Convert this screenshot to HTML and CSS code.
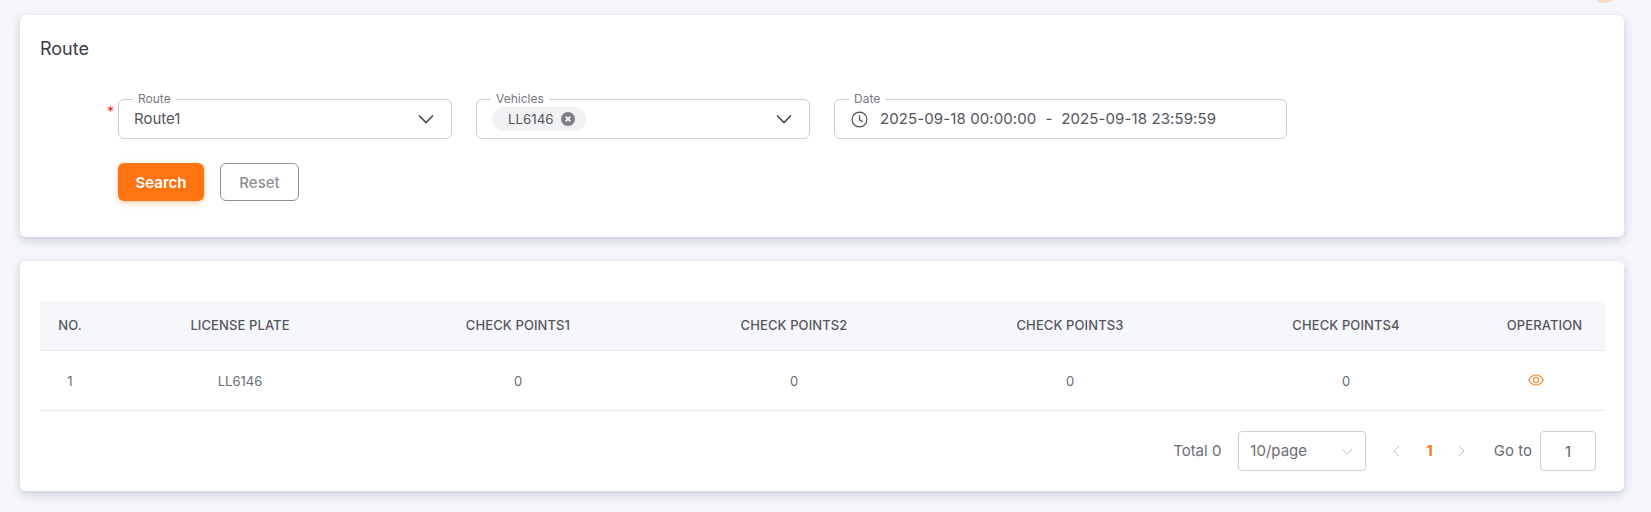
FILE: index.html
```html
<!DOCTYPE html>
<html lang="en">
<head>
<meta charset="utf-8">
<title>Route</title>
<link rel="stylesheet" href="styles.css">
</head>
<body>
<span class="avatar"></span>
<main class="page">
  <section class="card search-card">
    <h1 class="title">Route</h1>
    <div class="fields">
      <div class="field field-route">
        <span class="required">*</span>
        <span class="legend">Route</span>
        <span class="value">Route1</span>
        <svg class="chevron" viewBox="0 0 16 10"><path d="M1 1.500 8 8.500 15 1.500"/></svg>
      </div>
      <div class="field field-vehicles">
        <span class="legend">Vehicles</span>
        <span class="chip">LL6146
          <svg class="chip-x" viewBox="0 0 14 14"><circle cx="7" cy="7" r="7"/><path d="M4.600 4.600 9.400 9.400M9.400 4.600 4.600 9.400"/></svg>
        </span>
        <svg class="chevron" viewBox="0 0 16 10"><path d="M1 1.500 8 8.500 15 1.500"/></svg>
      </div>
      <div class="field field-date">
        <span class="legend">Date</span>
        <svg class="clock" viewBox="0 0 16 16"><circle cx="8" cy="8" r="7"/><path d="M8 4v4.300l3 1.700"/></svg>
        <span class="value date-value">2025-09-18 00:00:00</span>
        <span class="value date-sep">-</span>
        <span class="value date-value">2025-09-18 23:59:59</span>
      </div>
    </div>
    <div class="actions">
      <button class="btn btn-primary" type="button">Search</button>
      <button class="btn btn-plain" type="button">Reset</button>
    </div>
  </section>

  <section class="card table-card">
    <table class="table">
      <colgroup>
        <col class="col-no"><col class="col-plate"><col class="col-cp"><col class="col-cp"><col class="col-cp"><col class="col-cp"><col>
      </colgroup>
      <thead>
        <tr>
          <th>NO.</th><th>LICENSE PLATE</th><th>CHECK POINTS1</th><th>CHECK POINTS2</th><th>CHECK POINTS3</th><th>CHECK POINTS4</th><th>OPERATION</th>
        </tr>
      </thead>
      <tbody>
        <tr>
          <td>1</td><td>LL6146</td><td>0</td><td>0</td><td>0</td><td>0</td>
          <td class="op-cell"><svg class="eye" viewBox="0 0 16 12"><path d="M.8 6C2.400 2.900 5 1 8 1s5.600 1.900 7.200 5C13.600 9.100 11 11 8 11S2.400 9.100.8 6Z"/><circle cx="8" cy="6" r="2.600"/></svg></td>
        </tr>
      </tbody>
    </table>
    <div class="pager">
      <span class="total">Total 0</span>
      <div class="size">10/page
        <svg class="size-chevron" viewBox="0 0 12 7"><path d="M1 1 6 6 11 1"/></svg>
      </div>
      <svg class="arrow arrow-prev" viewBox="0 0 7 12"><path d="M6 1 1 6 6 11"/></svg>
      <span class="current">1</span>
      <svg class="arrow arrow-next" viewBox="0 0 7 12"><path d="M1 1 6 6 1 11"/></svg>
      <span class="goto">Go to</span>
      <div class="jump">1</div>
    </div>
  </section>
</main>
</body>
</html>
```
FILE: styles.css
```css
* { box-sizing: border-box; }
html, body { height: 100%; }
body {
  margin: 0;
  background: #f4f6fa;
  font-family: Inter, "Liberation Sans", sans-serif;
  color: #5f6066;
  overflow: hidden;
  position: relative;
}
.avatar {
  position: absolute;
  top: -22px;
  left: 1592px;
  width: 25px;
  height: 25px;
  border-radius: 50%;
  background: #fbd9c8;
}
.page {
  display: flex;
  flex-direction: column;
  gap: 24px;
  padding: 15px 27px 0 20px;
}
.card {
  background: #fff;
  border-radius: 6px;
  box-shadow: 0 3px 10px rgba(60, 70, 90, 0.24);
}
.search-card { height: 222px; padding: 0 20px; }
.title {
  margin: 0;
  padding-top: 24px;
  font-size: 18px;
  line-height: 20px;
  font-weight: 400;
  color: #3c3d48;
}
.fields {
  display: flex;
  gap: 24px;
  margin: 40px 0 0 78px;
}
.field {
  position: relative;
  height: 40px;
  border: 1px solid #ccced3;
  border-radius: 6px;
  display: flex;
  align-items: center;
  padding: 0 15px;
}
.field-route, .field-vehicles { width: 334px; }
.field-date { width: 453px; padding-left: 17px; }
.required {
  position: absolute;
  left: -12px;
  top: 5px;
  color: #e5262a;
  font-size: 14px;
  line-height: 14px;
}
.legend {
  position: absolute;
  left: 14px;
  top: -8px;
  padding: 0 5px;
  background: #fff;
  font-size: 12px;
  line-height: 14px;
  color: #77787e;
}
.value { font-size: 15px; line-height: 20px; color: #54555b; }
.chevron {
  position: absolute;
  right: 17px;
  top: 14px;
  width: 16px;
  height: 10px;
  fill: none;
  stroke: #4a4b50;
  stroke-width: 1.6;
}
.chip {
  display: inline-flex;
  align-items: center;
  gap: 7px;
  height: 24px;
  padding: 0 11px 0 16px;
  border-radius: 12px;
  background: #f1f2f4;
  font-size: 13.3px;
  color: #54555b;
}
.chip-x { width: 14px; height: 14px; }
.chip-x circle { fill: #7d7e85; }
.chip-x path { stroke: #fff; stroke-width: 1.6; fill: none; }
.clock {
  width: 17px;
  height: 17px;
  margin: 0 12px 0 -1px;
  fill: none;
  stroke: #54555b;
  stroke-width: 1.1;
}
.date-value { letter-spacing: 0.1px; }
.date-sep { margin: 0 9px; }
.actions {
  display: flex;
  gap: 16px;
  margin: 24px 0 0 78px;
}
.btn {
  height: 38px;
  border-radius: 6px;
  font-family: inherit;
  font-size: 15px;
}
.btn-primary {
  width: 86px;
  border: 0;
  background: #ff7410;
  color: #fff;
  font-weight: 600;
  box-shadow: 0 2px 6px rgba(255, 116, 16, 0.35);
}
.btn-plain {
  width: 79px;
  border: 1px solid #8f9096;
  background: #fff;
  color: #8f9096;
  font-weight: 500;
}
.table-card { height: 230px; padding: 40px 19px 0 20px; }
.table {
  width: 100%;
  border-collapse: collapse;
  table-layout: fixed;
  font-size: 13px;
}
.col-no { width: 60px; }
.col-plate { width: 280px; }
.col-cp { width: 276px; }
.table th {
  height: 49px;
  padding: 0;
  background: #f5f7fb;
  border-bottom: 1px solid #e8eaee;
  font-weight: 500;
  color: #55565d;
  text-align: center;
  letter-spacing: 0.1px;
}
.table td {
  height: 60px;
  padding: 2px 0 0;
  border-bottom: 1px solid #e8eaee;
  text-align: center;
  font-size: 13px;
  color: #6b6c72;
}
.table .op-cell { padding: 0 17px 0 0; }
.eye {
  display: block;
  margin: 0 auto;
  width: 16px;
  height: 12px;
  fill: none;
  stroke: #f2853a;
  stroke-width: 1.1;
}
.pager {
  display: flex;
  align-items: center;
  justify-content: flex-end;
  height: 40px;
  margin-top: 20px;
  padding-right: 9px;
  font-size: 15px;
  color: #6b6c72;
}
.total { margin-right: 17px; }
.size {
  position: relative;
  width: 128px;
  height: 40px;
  padding-left: 11px;
  line-height: 38px;
  border: 1px solid #ccced3;
  border-radius: 4px;
}
.size-chevron {
  position: absolute;
  right: 12px;
  top: 16px;
  width: 12px;
  height: 7px;
  fill: none;
  stroke: #c3c4c9;
  stroke-width: 1;
}
.arrow {
  width: 7px;
  height: 12px;
  fill: none;
  stroke: #c3c4c9;
  stroke-width: 1;
}
.arrow-prev { margin-left: 27px; }
.current { margin: 0 25px 0 26px; color: #f5791f; font-weight: 700; }
.goto { margin: 0 8px 0 29px; }
.jump {
  width: 56px;
  height: 40px;
  line-height: 40px;
  text-align: center;
  border: 1px solid #ccced3;
  border-radius: 4px;
  font-size: 15px;
  color: #5f6066;
}
```
